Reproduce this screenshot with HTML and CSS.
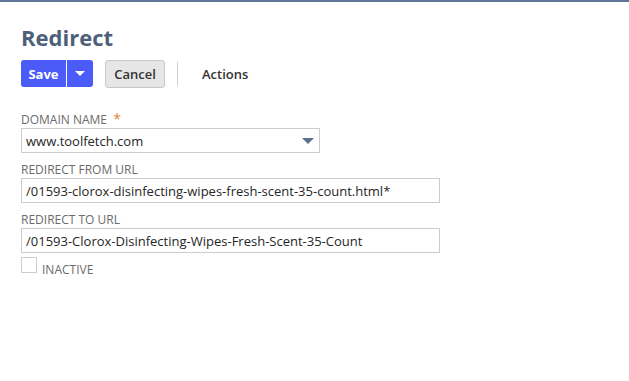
FILE: index.html
```html
<!DOCTYPE html>
<html>
<head>
<meta charset="utf-8">
<link rel="stylesheet" href="styles.css">
</head>
<body>
<div class="topbar"></div>
<main class="page">
  <h1 class="title">Redirect</h1>
  <div class="toolbar">
    <div class="save-group">
      <button class="btn-save">Save</button>
      <button class="btn-caret" aria-label="More"><svg width="10" height="6" viewBox="0 0 10 6"><path d="M0 0H10L5 5Z" fill="#fff"/></svg></button>
    </div>
    <button class="btn-cancel">Cancel</button>
    <span class="sep"></span>
    <span class="actions">Actions</span>
  </div>
  <form class="form">
    <div class="field">
      <label class="label">DOMAIN NAME <span class="req">*</span></label>
      <div class="select">
        <span>www.toolfetch.com</span>
        <svg width="12" height="7" viewBox="0 0 12 7"><path d="M0 0H12L6 6Z" fill="#5b6f8f"/></svg>
      </div>
    </div>
    <div class="field">
      <label class="label">REDIRECT FROM URL</label>
      <div class="input wide">/01593-clorox-disinfecting-wipes-fresh-scent-35-count.html*</div>
    </div>
    <div class="field">
      <label class="label">REDIRECT TO URL</label>
      <div class="input wide">/01593-Clorox-Disinfecting-Wipes-Fresh-Scent-35-Count</div>
    </div>
    <div class="check-row">
      <span class="checkbox"></span>
      <span class="check-label">INACTIVE</span>
    </div>
  </form>
</main>
</body>
</html>
```
FILE: styles.css
```css
* { box-sizing: border-box; }
html, body { margin: 0; padding: 0; background: #fff; }
body { font-family: "Open Sans", "Liberation Sans", sans-serif; color: #333; }
.topbar { height: 2px; background: #607799; }
.page { padding: 0 0 0 21px; }
.title {
  margin: 0;
  padding-top: 21px;
  font-size: 22px;
  line-height: 28px;
  font-weight: 700;
  color: #4d5f79;
}
.toolbar {
  display: flex;
  align-items: center;
  margin-top: 9px;
  height: 27px;
}
.save-group {
  display: flex;
  height: 27px;
  background: #4a5bf7;
  border-radius: 3px;
  overflow: hidden;
}
.save-group button {
  border: 0;
  background: transparent;
  color: #fff;
  font-family: inherit;
  padding: 0;
  height: 27px;
}
.btn-save {
  width: 46px;
  font-size: 13px;
  font-weight: 700;
  border-right: 1px solid #fff !important;
}
.btn-caret {
  width: 26px;
  display: flex;
  align-items: center;
  justify-content: center;
}
.btn-caret svg { display: block; margin-top: 1px; }
.btn-cancel {
  margin-left: 12px;
  width: 60px;
  height: 28px;
  border: 1px solid #c8c8c8;
  background: #e6e6e6;
  border-radius: 3px;
  font-family: inherit;
  font-size: 13px;
  font-weight: 600;
  color: #333;
  padding: 0;
}
.sep {
  width: 1px;
  height: 24px;
  background: #d0d0d0;
  margin-left: 12px;
}
.actions {
  margin-left: 24px;
  font-size: 13px;
  font-weight: 600;
  color: #333;
}
.form { margin-top: 20px; display: flex; flex-direction: column; }
.field { display: flex; flex-direction: column; margin-bottom: 4px; }
.label {
  font-size: 12px;
  color: #6b6b6b;
  height: 21px;
  padding-top: 6px;
  line-height: 14px;
}
.req { color: #e08a3c; margin-left: 3px; font-size: 14px; line-height: 0; }
.select, .input {
  height: 25px;
  border: 1px solid #cccccc;
  font-size: 13px;
  color: #262626;
  padding: 0 0 0 4px;
  display: flex;
  align-items: center;
  white-space: nowrap;
}
.select { width: 299px; justify-content: space-between; padding-right: 5px; }
.select svg { display: block; margin-top: 1px; }
.input.wide { width: 419px; }
.check-row { display: flex; align-items: flex-start; }
.checkbox {
  width: 16px;
  height: 16px;
  border: 1px solid #cccccc;
  background: #fff;
}
.check-label {
  margin-left: 5px;
  margin-top: 6px;
  font-size: 12px;
  line-height: 14px;
  color: #6b6b6b;
}
```
